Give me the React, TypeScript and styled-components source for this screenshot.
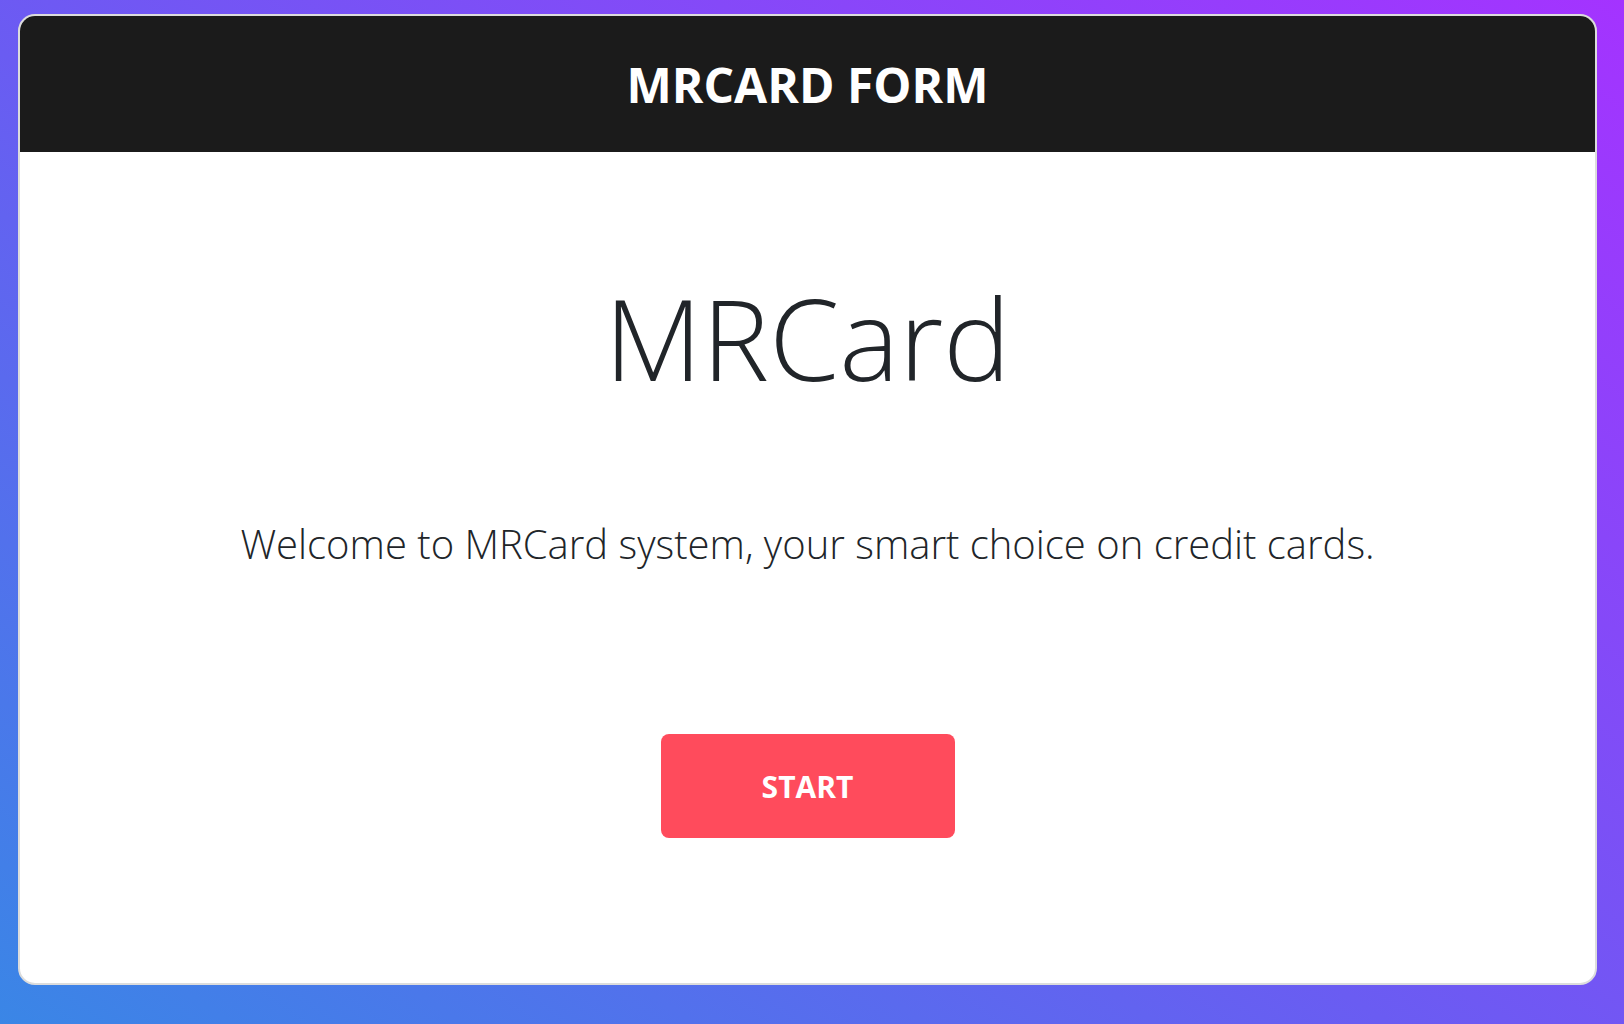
import React from "react";
import styled, { createGlobalStyle } from "styled-components";

const GlobalStyle = createGlobalStyle`
  html, body {
    margin: 0;
    padding: 0;
    height: 100%;
  }
  body {
    font-family: "Open Sans", "Liberation Sans", sans-serif;
    background: linear-gradient(35deg, #3a86e6 0%, #6a5cf2 45%, #a433ff 100%);
    min-height: 1024px;
  }
`;

const Page = styled.div`
  box-sizing: border-box;
  width: 1624px;
  height: 1024px;
  padding: 14px 27px 39px 18px;
`;

const Card = styled.div`
  box-sizing: border-box;
  height: 971px;
  background: #ffffff;
  border: 2px solid #dcdcdc;
  border-radius: 17px;
  overflow: hidden;
  display: flex;
  flex-direction: column;
`;

const Header = styled.header`
  height: 136px;
  flex: none;
  background: #1b1b1b;
  display: flex;
  align-items: center;
  justify-content: center;
`;

const HeaderTitle = styled.h1`
  margin: 0;
  padding-top: 2px;
  color: #ffffff;
  font-family: "Open Sans", sans-serif;
  font-weight: 700;
  font-size: 48px;
  line-height: 1;
`;

const Body = styled.main`
  display: flex;
  flex-direction: column;
  align-items: center;
  padding-top: 129px;
`;

const Title = styled.h2`
  margin: 0;
  color: #212529;
  font-family: "Open Sans", sans-serif;
  font-weight: 300;
  font-size: 113px;
  line-height: 1;
`;

const Lead = styled.p`
  margin: 130px 0 0;
  color: #212529;
  font-family: "Open Sans", sans-serif;
  font-weight: 300;
  font-size: 40px;
  line-height: 1;
`;

const StartButton = styled.button`
  margin-top: 170px;
  width: 294px;
  height: 104px;
  border: none;
  border-radius: 8px;
  background: #ff4b5c;
  color: #ffffff;
  font-family: "Open Sans", sans-serif;
  font-weight: 700;
  font-size: 30px;
  cursor: pointer;
`;

export default function App() {
  return (
    <>
      <GlobalStyle />
      <Page>
        <Card>
          <Header>
            <HeaderTitle>MRCARD FORM</HeaderTitle>
          </Header>
          <Body>
            <Title>MRCard</Title>
            <Lead>Welcome to MRCard system, your smart choice on credit cards.</Lead>
            <StartButton>START</StartButton>
          </Body>
        </Card>
      </Page>
    </>
  );
}
